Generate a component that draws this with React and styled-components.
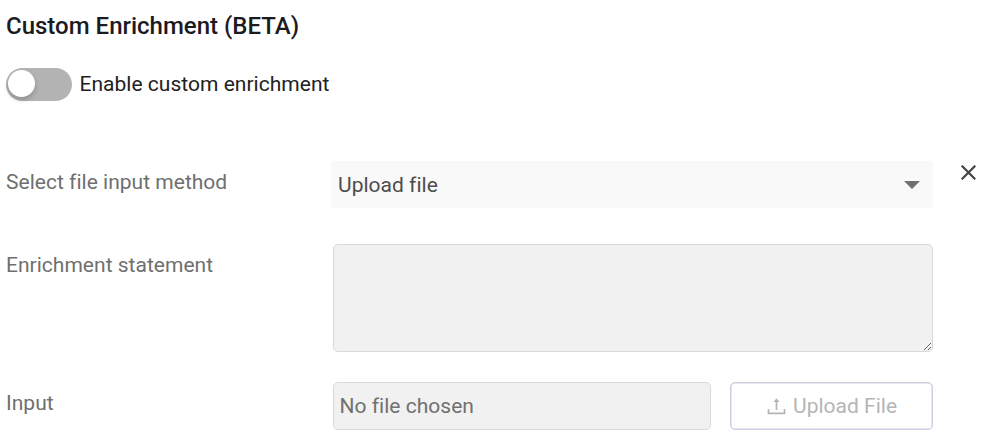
import React from "react";
import styled, { createGlobalStyle } from "styled-components";

const Global = createGlobalStyle`
  * { box-sizing: border-box; }
  body { margin: 0; background: #fff; font-family: Roboto, sans-serif; font-size: 21px; letter-spacing: 0.02px; font-variant-ligatures: none; color: #212121; }
`;
const Page = styled.main`
  width: 990px; height: 447px; padding: 9px 0 0 6px; overflow: hidden;
`;
const Title = styled.h1`
  margin: 0; font-size: 24px; line-height: 34px; font-weight: 500; letter-spacing: 0; color: #1b1b1f;
`;
const ToggleRow = styled.div`
  display: flex; align-items: flex-start; height: 33px; margin-top: 25px; gap: 7.5px;
`;
const Switch = styled.button`
  width: 66px; height: 33px; padding: 2px; border: 0; border-radius: 17px; background: #b3b3b3; display: flex; align-items: flex-start;
`;
const Knob = styled.span`
  width: 27px; height: 27px; border-radius: 50%; background: #fff; box-shadow: 0 3px 5px rgba(0, 0, 0, 0.2);
`;
const ToggleLabel = styled.span`
  line-height: 24px; padding-top: 4px; color: #212121;
`;
const Field = styled.div`
  display: grid; grid-template-columns: 327px 600px 1fr; align-items: start; margin-top: ${(p) => p.$gap}px;
`;
const Label = styled.label`
  line-height: 24px; padding-top: 9px; color: #6f6f6f;
`;
const Select = styled.div`
  display: flex; align-items: center; justify-content: space-between; height: 47px; width: 602px; margin-left: -2px; padding: 0 13px 0 7px; border-radius: 3px; background: #f9f9f9; color: #4d4d4d;
`;
const Close = styled.button`
  border: 0; padding: 0; background: none; margin: 4px 0 0 28px; width: 15px; height: 15px; display: flex;
`;
const Area = styled.textarea`
  display: block; width: 600px; height: 108px; border: 1px solid #d8d8d8; border-radius: 5px; background: #f1f1f1; resize: vertical;
`;
const FileRow = styled.div`
  display: flex; gap: 19px;
`;
const FileName = styled.div`
  width: 378px; height: 48px; padding: 0 5.5px; border: 1px solid #d8d8d8; border-radius: 5px; background: #f1f1f1; line-height: 46px; color: #707070;
`;
const Upload = styled.button`
  display: flex; align-items: center; width: 203px; height: 48px; padding: 0 0 0 36px; gap: 7px; border: 1px solid #cdcde0; border-radius: 5px; background: #fff; font: inherit; letter-spacing: inherit; color: #b5b5b5; box-shadow: inset 0 0 0 0.5px #cdcde2;
`;

export default function App() {
  return (
    <>
      <Global />
      <Page>
        <Title>Custom Enrichment (BETA)</Title>
        <ToggleRow>
          <Switch aria-label="Enable custom enrichment"><Knob /></Switch>
          <ToggleLabel>Enable custom enrichment</ToggleLabel>
        </ToggleRow>
        <Field $gap={60}>
          <Label>Select file input method</Label>
          <Select>
            <span>Upload file</span>
            <svg width="16" height="8" viewBox="0 0 16 8"><path d="M0 0h16L8 8z" fill="#707070" /></svg>
          </Select>
          <Close aria-label="Remove">
            <svg width="15" height="15" viewBox="0 0 15 15"><path d="M.7 .7l13.600 13.600M14.300 .7L.7 14.300" stroke="#444" strokeWidth="2.2" /></svg>
          </Close>
        </Field>
        <Field $gap={36}>
          <Label>Enrichment statement</Label>
          <Area aria-label="Enrichment statement" />
        </Field>
        <Field $gap={30}>
          <Label>Input</Label>
          <FileRow>
            <FileName>No file chosen</FileName>
            <Upload>
              <svg width="19" height="18" viewBox="0 0 19 18"><path d="M1.500 12v4.300h16V12M9.500 13V3" fill="none" stroke="#b5b5b5" strokeWidth="1.700" /><path d="M6.500 5L9.500 1.200l3 3.800z" fill="#b5b5b5" /></svg>
              Upload File
            </Upload>
          </FileRow>
        </Field>
      </Page>
    </>
  );
}
